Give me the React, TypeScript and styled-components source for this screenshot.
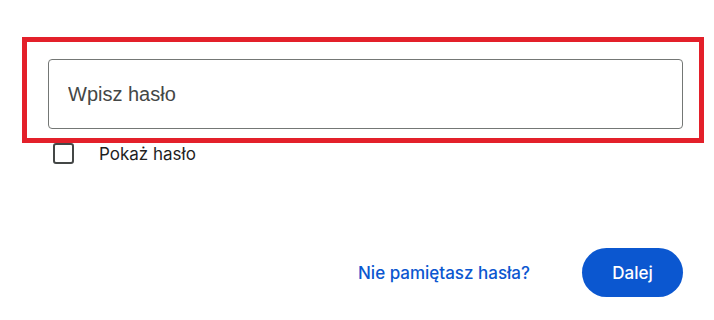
import React, { useState } from "react";
import styled, { createGlobalStyle } from "styled-components";

const Global = createGlobalStyle`
  html, body { margin: 0; padding: 0; background: #ffffff; }
  body { font-family: Inter, Roboto, "Liberation Sans", sans-serif; }
`;

const Page = styled.div`
  width: 714px;
  height: 320px;
  box-sizing: border-box;
  padding: 37px 0 0 22px;
  display: flex;
  flex-direction: column;
`;

const Highlight = styled.div`
  width: 682px;
  height: 106px;
  box-sizing: border-box;
  border: 5px solid #e3202a;
  padding: 17px 16px 0 21px;
`;

const Field = styled.input`
  display: block;
  width: 635px;
  height: 70px;
  box-sizing: border-box;
  border: 1px solid #747775;
  border-radius: 4px;
  padding: 0 0 0 19px;
  font-family: "Liberation Sans", Arial, sans-serif;
  font-size: 20px;
  color: #1f1f1f;
  outline: none;
  &::placeholder { color: #444746; }
`;

const CheckRow = styled.label`
  display: flex;
  align-items: center;
  gap: 25px;
  height: 21px;
  padding-left: 31px;
  cursor: pointer;
`;

const Box = styled.span<{ $checked: boolean }>`
  width: 21px;
  height: 21px;
  box-sizing: border-box;
  border: 2px solid #444746;
  border-radius: 3px;
  background: ${(p) => (p.$checked ? "#0b57d0" : "transparent")};
`;

const Label = styled.span`
  font-size: 17px;
  color: #1f1f1f;
`;

const Actions = styled.div`
  width: 661px;
  margin-top: 84px;
  display: flex;
  justify-content: flex-end;
  align-items: center;
  gap: 52px;
`;

const Link = styled.a`
  font-size: 17px;
  font-weight: 500;
  color: #0b57d0;
  text-decoration: none;
  cursor: pointer;
`;

const Button = styled.button`
  width: 101px;
  height: 49px;
  border: none;
  border-radius: 25px;
  background: #0b57d0;
  color: #ffffff;
  font-family: Inter, Roboto, "Liberation Sans", sans-serif;
  font-size: 17px;
  font-weight: 500;
  cursor: pointer;
`;

export default function App() {
  const [show, setShow] = useState(false);
  return (
    <>
      <Global />
      <Page>
        <Highlight>
          <Field type={show ? "text" : "password"} placeholder="Wpisz hasło" />
        </Highlight>
        <CheckRow onClick={() => setShow(!show)}>
          <Box $checked={show} />
          <Label>Pokaż hasło</Label>
        </CheckRow>
        <Actions>
          <Link>Nie pamiętasz hasła?</Link>
          <Button>Dalej</Button>
        </Actions>
      </Page>
    </>
  );
}
